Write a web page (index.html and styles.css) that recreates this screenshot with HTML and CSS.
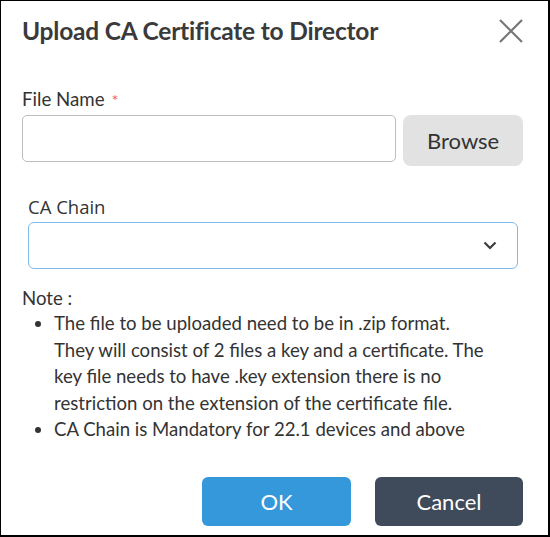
FILE: index.html
```html
<!DOCTYPE html>
<html>
<head>
<meta charset="utf-8">
<link rel="stylesheet" href="styles.css">
</head>
<body>
<div class="dialog">
  <div class="header">
    <h1 class="title">Upload CA Certificate to Director</h1>
    <svg class="close" width="26" height="26" viewBox="0 0 26 26"><path d="M2 2 L24 24 M24 2 L2 24" stroke="#777" stroke-width="2.2" fill="none"/></svg>
  </div>
  <div class="field">
    <label class="label">File Name <span class="req">*</span></label>
    <div class="file-row">
      <div class="input"></div>
      <button class="browse">Browse</button>
    </div>
  </div>
  <div class="field chain">
    <label class="label alt">CA Chain</label>
    <div class="select">
      <svg width="14" height="9" viewBox="0 0 14 9"><path d="M1.5 1.5 L7 7 L12.5 1.5" stroke="#3c3c3c" stroke-width="2.2" fill="none"/></svg>
    </div>
  </div>
  <div class="note">
    <div class="note-title">Note :</div>
    <ul class="list">
      <li>The file to be uploaded need to be in .zip format.<br>They will consist of 2 files a key and a certificate. The key file needs to have .key extension there is no restriction on the extension of the certificate file.</li>
      <li>CA Chain is Mandatory for 22.1 devices and above</li>
    </ul>
  </div>
  <div class="footer">
    <button class="btn ok">OK</button>
    <button class="btn cancel">Cancel</button>
  </div>
</div>
</body>
</html>
```
FILE: styles.css
```css
html, body { margin: 0; padding: 0; background: #fff; }
body { font-family: Lato, "Open Sans", sans-serif; color: #333; }
.dialog {
  box-sizing: border-box;
  width: 550px;
  height: 537px;
  border-top: 1px solid #000;
  border-left: 1px solid #000;
  border-right: 2px solid #000;
  border-bottom: 2px solid #000;
  padding: 0 25px 0 21px;
  display: flex;
  flex-direction: column;
}
.dialog > * { flex-shrink: 0; }
.header {
  display: flex;
  justify-content: space-between;
  align-items: center;
  height: 58px;
}
.title {
  margin: 0;
  font-size: 24.5px;
  font-weight: 700;
  color: #3a3a3a;
  letter-spacing: -0.2px;
}
.close { margin-right: -1px; margin-top: 2px; }
.field { margin-top: 29px; }
.label { display: block; font-size: 18.7px; line-height: 22px; color: #333; }
.req { color: #e8606a; font-size: 16px; margin-left: 2px; }
.file-row { display: flex; gap: 7px; margin-top: 4px; align-items: flex-start; }
.input {
  width: 375px;
  height: 47px;
  border: 1px solid #bdbdbd;
  border-radius: 5px;
  box-sizing: border-box;
}
.browse {
  width: 120px;
  height: 51px;
  border: none;
  border-radius: 8px;
  background: #e2e2e2;
  font-family: Lato, sans-serif;
  font-size: 22px;
  color: #333;
  padding: 0;
}
.chain { margin-top: 30px; margin-left: 6px; margin-right: 5px; }
.label.alt { font-family: "Open Sans", sans-serif; font-size: 18.5px; line-height: 22px; }
.select {
  margin-top: 4px;
  height: 47px;
  border: 1px solid #7fbbea;
  border-radius: 6px;
  box-sizing: border-box;
  display: flex;
  justify-content: flex-end;
  align-items: center;
  padding-right: 20px;
}
.note { margin-top: 18px; font-size: 18.6px; line-height: 26.5px; color: #333; }
.note-title { line-height: 22px; }
.list { margin: 1px 30px 0 0; padding-left: 32px; }
.list li { padding-left: 0; }
.footer {
  margin-top: auto;
  margin-bottom: 9px;
  display: flex;
  justify-content: flex-end;
  gap: 24px;
}
.btn {
  width: 149px;
  height: 49px;
  border: none;
  border-radius: 6px;
  font-family: Lato, sans-serif;
  font-size: 22px;
  color: #fff;
  padding: 0;
}
.ok { background: #3498db; }
.cancel { background: #3f4a5a; width: 148px; }
```
